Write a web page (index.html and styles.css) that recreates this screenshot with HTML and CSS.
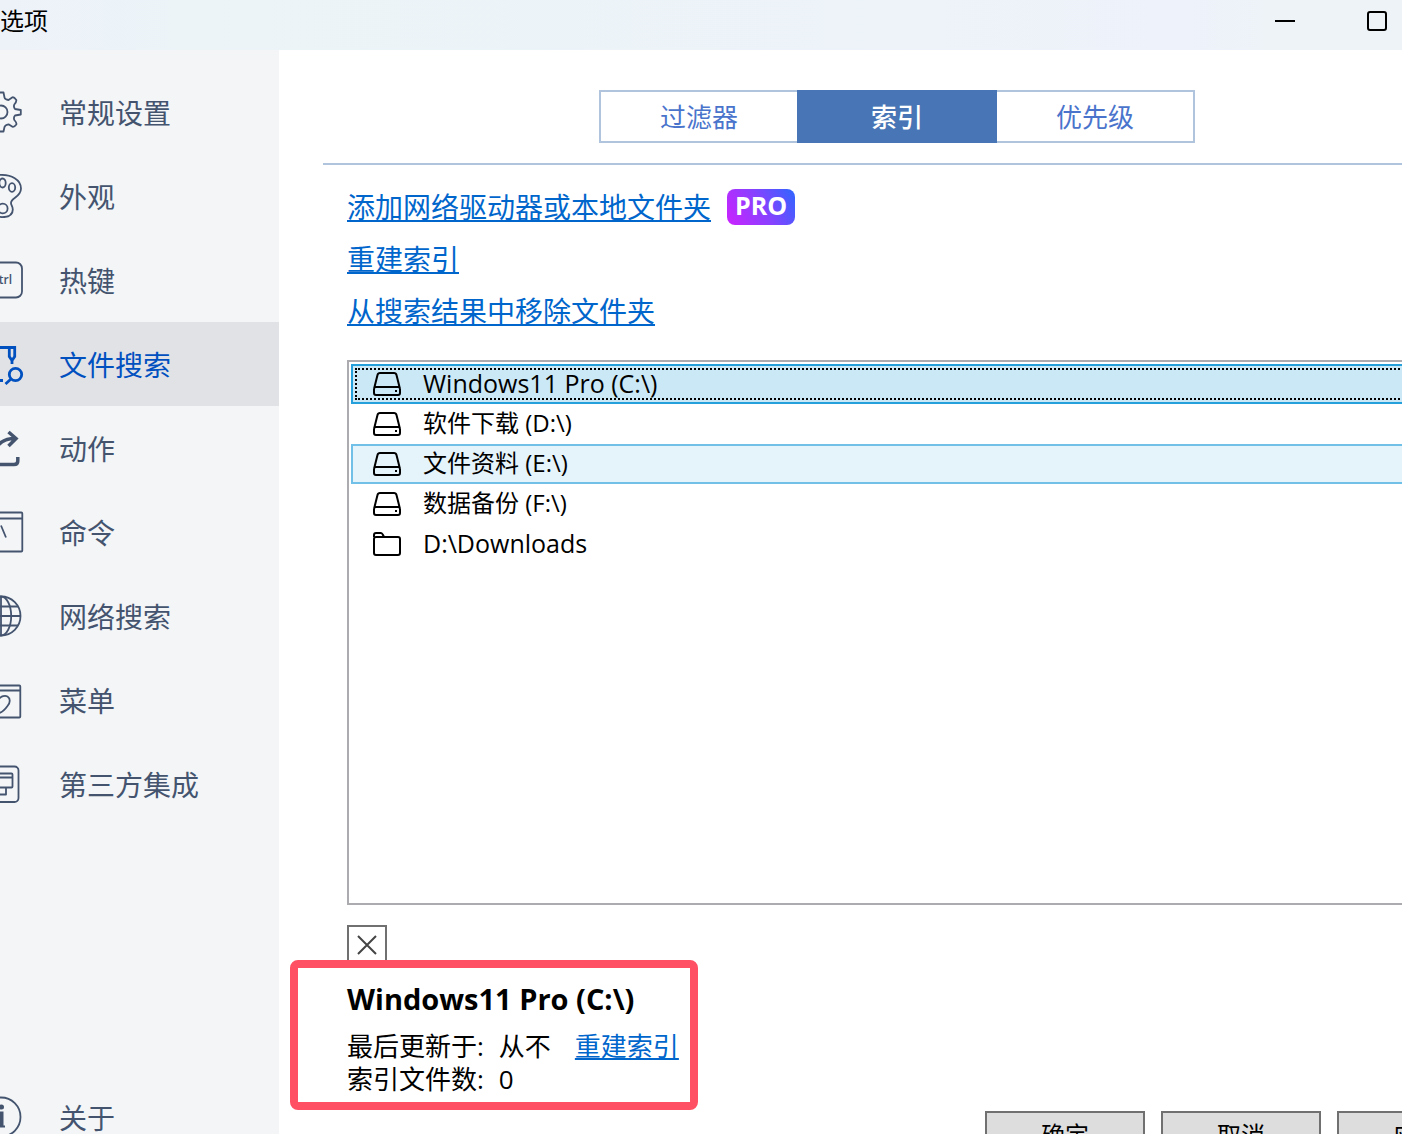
FILE: index.html
```html
<!DOCTYPE html>
<html lang="zh-CN">
<head>
<meta charset="utf-8">
<meta name="viewport" content="width=device-width, initial-scale=1">
<title>选项</title>
<link rel="stylesheet" href="styles.css">
</head>
<body>
<div class="window">
  <header class="titlebar">
    <h1 class="title">选项</h1>
    <div class="window-controls">
      <button class="window-button" type="button" aria-label="最小化"><svg width="20" height="20" viewBox="0 0 20 20"><path d="M0 10H20"/></svg></button>
      <button class="window-button" type="button" aria-label="最大化"><svg width="20" height="20" viewBox="0 0 20 20"><rect x="1" y="1" width="18" height="18" rx="2"/></svg></button>
      <button class="window-button" type="button" aria-label="关闭"><svg width="20" height="20" viewBox="0 0 20 20"><path d="M1 1 19 19M19 1 1 19"/></svg></button>
    </div>
  </header>

  <nav class="sidebar">
    <a class="nav-item" href="#general"><svg class="nav-icon" viewBox="0 0 24 44"><circle cx="1" cy="22" r="6.5"/><path d="M-6 2.5H3.5L4.5 7.500Q5 9.500 8.500 10L12.500 7.300Q14 6.800 16.300 10 16.700 11.500 14.300 14.500 13.300 17 15 19L20.800 20V24.500L15 25.500Q13.300 27.500 14.300 30 17 33 16.300 34.500 14 37.500 12.500 36.800L8.500 34.300Q5 35 4.500 37L3.500 41.500H-6"/></svg><span>常规设置</span></a>
    <a class="nav-item" href="#appearance"><svg class="nav-icon" viewBox="0 0 24 44"><path d="M-2 1C12 0 21 6 21 14.500 21 23 11 24 11 29 11 31.500 12.800 32 12.800 35.500 12.800 41 8 43.200 2 43.200L-2 42.500"/><ellipse cx="2.500" cy="9" rx="3.200" ry="4.500"/><ellipse cx="12" cy="13.500" rx="3.200" ry="4.300"/><circle cx="2.800" cy="34.500" r="4.800"/></svg><span>外观</span></a>
    <a class="nav-item" href="#hotkeys"><svg class="nav-icon" viewBox="0 0 24 44"><rect x="-30" y="4.500" width="52" height="35" rx="6"/><text class="key-cap" x="12" y="26" text-anchor="end">Ctrl</text></svg><span>热键</span></a>
    <a class="nav-item nav-item-current" href="#file-search" aria-current="page"><svg class="nav-icon nav-icon-medium" viewBox="0 0 24 44"><path d="M-2 5.500H14.700V14.500L12 18.500 9.300 14.500V6M12 18V22M11 37 5.500 42M-2 38.500H3"/><circle cx="15.500" cy="32.500" r="6.200"/></svg><span>文件搜索</span></a>
    <a class="nav-item" href="#actions"><svg class="nav-icon nav-icon-heavy" viewBox="0 0 24 44"><path d="M8.500 6 16 12.500 8.500 20M-4 22Q2 12.500 15 12.500M-4 38.500H14Q17.800 38.500 17.800 35V31"/></svg><span>动作</span></a>
    <a class="nav-item" href="#commands"><svg class="nav-icon" viewBox="0 0 24 44"><rect x="-30" y="2.500" width="52.300" height="39" rx="1"/><path d="M-2 8.500H22M1 15.500 6 27.500"/></svg><span>命令</span></a>
    <a class="nav-item" href="#web-search"><svg class="nav-icon" viewBox="0 0 24 44"><circle cx="1" cy="22" r="19.500"/><ellipse cx="1" cy="22" rx="10.200" ry="19.500"/><path d="M1 2V42M-2 12.500H18M-2 22H21M-2 31.500H18"/></svg><span>网络搜索</span></a>
    <a class="nav-item" href="#menus"><svg class="nav-icon" viewBox="0 0 24 44"><rect x="-30" y="7.500" width="50.300" height="32" rx="1"/><path d="M-2 12.500H20M-2 22C1 17.500 5.500 17.500 7.500 18.500 10.500 20.500 10.500 24.500 7.500 28 5 31.500 2 34.500-1 35"/></svg><span>菜单</span></a>
    <a class="nav-item" href="#integrations"><svg class="nav-icon" viewBox="0 0 24 44"><rect x="-30" y="4.500" width="48.500" height="35.500" rx="4"/><path d="M-2 11.500H11.500Q12.500 11.500 12.500 12.500V24.500Q12.500 25.500 11.500 25.500H-2M-2 15.500H12.500M6 25.500V32.500H-2"/></svg><span>第三方集成</span></a>
    <a class="nav-item nav-item-last" href="#about"><svg class="nav-icon" viewBox="0 0 24 44"><circle cx="1" cy="22" r="19.500"/><path class="solid" d="M-3 16.500H3.500V30.500H5V32.500H-4V30.500H-1V18H-3Z"/><circle class="solid" cx="1.500" cy="12" r="2.500"/></svg><span>关于</span></a>
  </nav>

  <main class="content">
    <div class="tabs" role="tablist">
      <button class="tab" type="button" role="tab" aria-selected="false">过滤器</button>
      <button class="tab" type="button" role="tab" aria-selected="true">索引</button>
      <button class="tab" type="button" role="tab" aria-selected="false">优先级</button>
    </div>
    <hr class="divider">

    <div class="panel">
      <ul class="links">
        <li class="link-row"><a href="#add-folder">添加网络驱动器或本地文件夹</a><span class="badge">PRO</span></li>
        <li class="link-row"><a href="#rebuild">重建索引</a></li>
        <li class="link-row"><a href="#exclude">从搜索结果中移除文件夹</a></li>
      </ul>

      <ul class="drives" role="listbox">
        <li class="drive drive-latin drive-selected" role="option" aria-selected="true"><svg class="drive-icon" viewBox="0 0 28 24"><path d="M1 17 4.500 3Q5 1 7 1H21Q23 1 23.500 3L27 17M3 15H25Q27 15 27 17V21Q27 23 25 23H3Q1 23 1 21V17Q1 15 3 15Z"/><path class="led" d="M22 18H24V20H22Z"/></svg><span>Windows11 Pro (C:\)</span></li>
        <li class="drive" role="option" aria-selected="false"><svg class="drive-icon" viewBox="0 0 28 24"><path d="M1 17 4.500 3Q5 1 7 1H21Q23 1 23.500 3L27 17M3 15H25Q27 15 27 17V21Q27 23 25 23H3Q1 23 1 21V17Q1 15 3 15Z"/><path class="led" d="M22 18H24V20H22Z"/></svg><span>软件下载 (D:\)</span></li>
        <li class="drive drive-hover" role="option" aria-selected="false"><svg class="drive-icon" viewBox="0 0 28 24"><path d="M1 17 4.500 3Q5 1 7 1H21Q23 1 23.500 3L27 17M3 15H25Q27 15 27 17V21Q27 23 25 23H3Q1 23 1 21V17Q1 15 3 15Z"/><path class="led" d="M22 18H24V20H22Z"/></svg><span>文件资料 (E:\)</span></li>
        <li class="drive" role="option" aria-selected="false"><svg class="drive-icon" viewBox="0 0 28 24"><path d="M1 17 4.500 3Q5 1 7 1H21Q23 1 23.500 3L27 17M3 15H25Q27 15 27 17V21Q27 23 25 23H3Q1 23 1 21V17Q1 15 3 15Z"/><path class="led" d="M22 18H24V20H22Z"/></svg><span>数据备份 (F:\)</span></li>
        <li class="drive drive-latin" role="option" aria-selected="false"><svg class="drive-icon" viewBox="0 0 28 24"><path d="M1 5V3Q1 1 3 1H8Q9 1 10 3L11 5H25Q27 5 27 7V21Q27 23 25 23H3Q1 23 1 21V7Q1 5 3 5H11"/></svg><span>D:\Downloads</span></li>
      </ul>

      <button class="remove" type="button" aria-label="移除"><svg width="20" height="20" viewBox="0 0 20 20"><path d="M1 1 19 19M19 1 1 19"/></svg></button>

      <section class="status">
        <h2 class="status-title">Windows11 Pro (C:\)</h2>
        <dl class="facts">
          <dt>最后更新于:</dt>
          <dd>从不<a class="rebuild" href="#rebuild">重建索引</a></dd>
          <dt>索引文件数:</dt>
          <dd>0</dd>
        </dl>
      </section>
    </div>

    <footer class="actions">
      <button class="action" type="button">确定</button>
      <button class="action" type="button">取消</button>
      <button class="action" type="button">应用</button>
    </footer>
  </main>
</div>
</body>
</html>
```
FILE: styles.css
```css
* {
  box-sizing: border-box;
}

body {
  margin: 0;
  height: 100vh;
  overflow: hidden;
  background: #fff;
  color: #000;
  font: 24px/40px "Open Sans", "Noto Sans CJK SC", sans-serif;
}

button {
  margin: 0;
  padding: 0;
  border: 0;
  background: none;
  color: inherit;
  font: inherit;
}

ul,
dl,
dd,
h1,
h2 {
  margin: 0;
  padding: 0;
  list-style: none;
}

a {
  color: #0066cc;
  text-decoration: underline;
  text-decoration-thickness: 2px;
  text-underline-offset: 2px;
  text-decoration-skip-ink: none;
}

svg {
  display: block;
  flex: none;
  fill: none;
  stroke: currentColor;
  stroke-width: 2;
}

/* The window runs past the right and bottom edges of the view */
.window {
  display: grid;
  grid-template: 50px 1fr / 279px 1fr;
  width: calc(100% + 113px);
  min-height: calc(100vh + 25px);
}

.titlebar {
  grid-column: 1 / -1;
  display: flex;
  justify-content: space-between;
  background: linear-gradient(90deg, #edf2f9, #ecf4f8 12%, #edf3f8 60%, #eef2fb 78%, #edf3f7 84%);
}

.title {
  font-size: 24px;
  font-weight: 400;
  line-height: 42px;
}

.window-controls {
  display: flex;
}

.window-button {
  display: grid;
  place-items: center;
  width: 92px;
  height: 42px;
}

.sidebar {
  display: flex;
  flex-direction: column;
  padding-top: 20px;
  background: #f3f5f7;
}

.nav-item {
  display: flex;
  align-items: center;
  gap: 35px;
  height: 84px;
  color: #44546f;
  font-size: 28px;
  text-decoration: none;
}

.nav-item span {
  padding-top: 2px;
}

.nav-item-current {
  background: #e1e2e6;
  color: #0050c0;
}

.nav-item-last {
  margin-top: auto;
}

.nav-icon {
  width: 24px;
  height: 44px;
  stroke-width: 1.8;
  stroke-linejoin: round;
}

.nav-icon-medium {
  stroke-width: 2.8;
  stroke-linejoin: miter;
}

.nav-icon-heavy {
  stroke-width: 3.5;
  stroke-linejoin: miter;
}

.key-cap {
  fill: currentColor;
  stroke: none;
  font: 600 12px "Open Sans", sans-serif;
}

.solid {
  fill: currentColor;
  stroke: none;
}

.content {
  display: flex;
  flex-direction: column;
  padding-top: 40px;
}

.tabs {
  display: grid;
  grid-template-columns: 1fr 200px 1fr;
  width: 596px;
  height: 53px;
  margin: 0 auto;
}

.tab {
  border: 2px solid #b0c4de;
  color: #4a74cc;
  font-size: 26px;
}

.tab:first-child {
  border-right: 0;
}

.tab:last-child {
  border-left: 0;
}

.tab[aria-selected="true"] {
  border-color: #4775b5;
  background: #4775b5;
  color: #fff;
  font-weight: 500;
}

.divider {
  width: auto;
  height: 2px;
  margin: 20px 44px 16px;
  border: 0;
  background: #b0c4de;
}

.panel {
  flex: 1;
  display: flex;
  flex-direction: column;
  align-items: flex-start;
  padding: 0 24px 0 68px;
}

.links {
  font-size: 28px;
}

.link-row {
  display: flex;
  align-items: center;
  gap: 16px;
  height: 52px;
}

.badge {
  width: 68px;
  height: 36px;
  border-radius: 8px;
  background: linear-gradient(60deg, #cc22ff, #8a40ff 50%, #2e66ff);
  color: #fff;
  font-size: 25px;
  font-weight: 700;
  line-height: 32px;
  text-align: center;
}

.drives {
  flex: 1;
  align-self: stretch;
  margin-top: 23px;
  padding: 2px;
  border: 2px solid #ababb0;
}

.drive {
  display: flex;
  align-items: center;
  gap: 22px;
  height: 40px;
  padding-left: 20px;
  border: 2px solid transparent;
  line-height: 34px;
}

.drive span {
  padding-bottom: 2px;
}

.drive-latin {
  font-size: 25px;
}

.drive-selected {
  border-color: #26a0da;
  outline: 2px dotted #000;
  outline-offset: -6px;
  background: #cbe8f6;
}

.drive-hover {
  border-color: #70c0e7;
  background: #e5f3fb;
}

.drive-icon {
  width: 28px;
  height: 24px;
}

.led {
  fill: currentColor;
  stroke: none;
}

.remove {
  display: grid;
  place-items: center;
  width: 40px;
  height: 40px;
  margin-top: 20px;
  border: 2px solid #707070;
  color: #444;
}

.status {
  position: relative;
  margin-top: 15px;
}

/* Red frame drawn over the status block */
.status::after {
  content: "";
  position: absolute;
  inset: -20px -19px -14px -57px;
  border: 8px solid #ff5064;
  border-radius: 8px;
  pointer-events: none;
}

.status-title {
  font-size: 29px;
  font-weight: 700;
  line-height: 38px;
}

.facts {
  display: grid;
  grid-template-columns: auto 1fr;
  column-gap: 15px;
  margin-top: 12px;
  font-size: 26px;
  line-height: 33px;
}

.rebuild {
  margin-left: 24px;
}

.actions {
  display: flex;
  justify-content: flex-end;
  gap: 16px;
  margin-top: 15px;
  padding-right: 18px;
}

.action {
  width: 160px;
  height: 48px;
  border: 2px solid #707070;
  background: #ddd;
}
```
